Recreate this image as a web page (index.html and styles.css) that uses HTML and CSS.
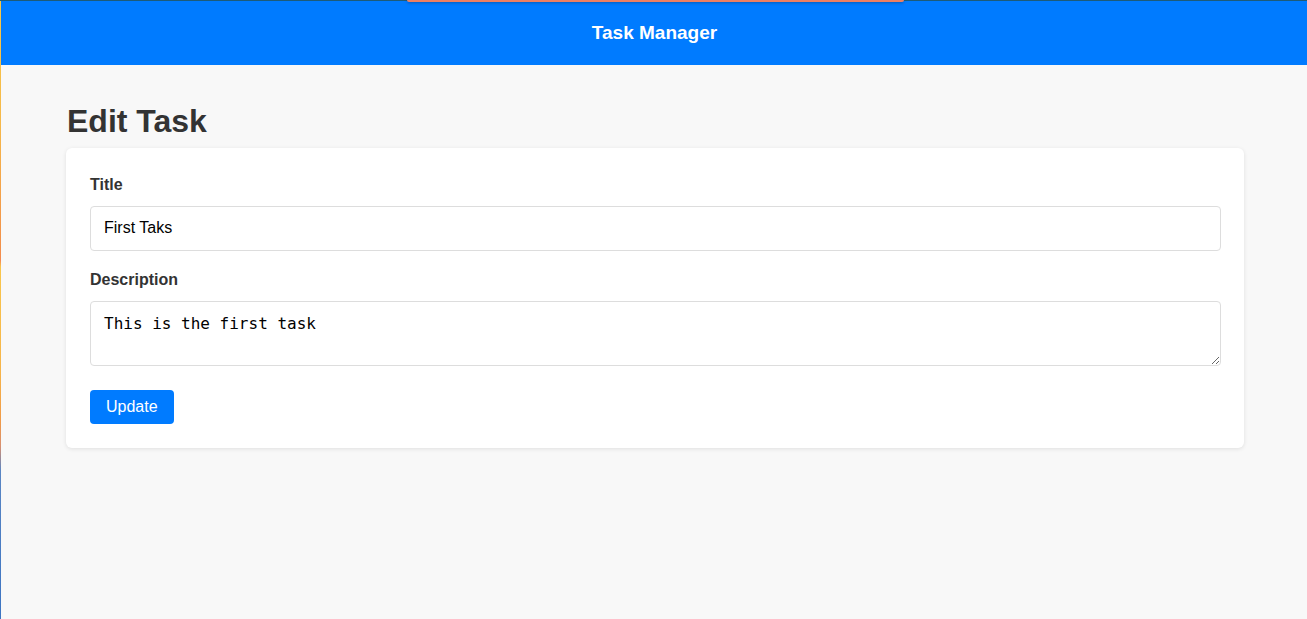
FILE: index.html
```html
<!DOCTYPE html>
<html lang="en">
<head>
<meta charset="utf-8">
<title>Task Manager</title>
<link rel="stylesheet" href="styles.css">
</head>
<body>
<div class="edge-top"></div>
<div class="edge-left"></div>
<div class="notch"></div>
<header class="app-header">
  <h3 class="app-title">Task Manager</h3>
</header>
<main class="page">
  <h1 class="page-title">Edit Task</h1>
  <form class="card">
    <div class="form-group">
      <label class="form-label" for="title">Title</label>
      <input class="form-input" id="title" type="text" value="First Taks">
    </div>
    <div class="form-group form-group-text">
      <label class="form-label" for="desc">Description</label>
      <textarea class="form-textarea" id="desc">This is the first task</textarea>
    </div>
    <button class="btn" type="button">Update</button>
  </form>
</main>
</body>
</html>
```

FILE: styles.css
```css
* { box-sizing: border-box; }
html, body { margin: 0; padding: 0; }
body {
  background: #f8f8f8;
  font-family: "Liberation Sans", Arial, sans-serif;
  color: #333;
  min-height: 619px;
}
.edge-top {
  position: absolute;
  top: 0; left: 0; right: 0;
  height: 1px;
  background: #1d5b78;
  z-index: 5;
}
.edge-left {
  position: absolute;
  top: 1px; left: 0;
  width: 1px;
  height: 618px;
  background: linear-gradient(to bottom, #f7c948 0%, #f6b84a 20%, #f2904a 40%, #f58b50 42%, #f9c64c 43%, #f6b44a 60%, #f09a48 68%, #d89070 72%, #5a86c4 76%, #3c74c2 100%);
  z-index: 5;
}
.notch {
  position: absolute;
  top: 0; left: 407px;
  width: 497px;
  height: 2px;
  background: #ec7f62;
  border-radius: 0 0 4px 4px;
  box-shadow: 0 1px 3px rgba(0, 0, 0, 0.3);
  z-index: 6;
}
.app-header {
  background: #007bff;
  color: #fff;
  padding: 22px 0 21px;
  text-align: center;
}
.app-title {
  margin: 0 0 0 2px;
  font-size: 19px;
  line-height: 22px;
  font-weight: bold;
}
.page {
  padding: 38px 63px 40px 66px;
}
.page-title {
  margin: 0 0 8px 1px;
  font-size: 32px;
  line-height: 37px;
  font-weight: bold;
  color: #333;
}
.card {
  background: #fff;
  border-radius: 6px;
  box-shadow: 0 1px 4px rgba(0, 0, 0, 0.1);
  padding: 28px 23px 24px 24px;
}
.form-group {
  margin-bottom: 20px;
}
.form-group-text {
  margin-bottom: 24px;
}
.form-label {
  display: block;
  font-size: 16px;
  line-height: 18px;
  font-weight: bold;
  color: #333;
  margin-bottom: 12px;
}
.form-input, .form-textarea {
  display: block;
  width: 100%;
  border: 1px solid #ddd;
  border-radius: 4px;
  background: #fff;
  color: #000;
  font-size: 16px;
}
.form-input {
  font-family: "Liberation Sans", Arial, sans-serif;
  height: 45px;
  padding: 11px 12px 13px 13px;
}
.form-textarea {
  font-family: "DejaVu Sans Mono", monospace;
  height: 65px;
  line-height: 19px;
  padding: 12px 12px 12px 13px;
  resize: vertical;
}
.btn {
  display: block;
  background: #007bff;
  color: #fff;
  border: none;
  border-radius: 4px;
  padding: 8px 16px;
  font-family: "Liberation Sans", Arial, sans-serif;
  font-size: 16px;
  line-height: 18px;
  height: 34px;
}
```
